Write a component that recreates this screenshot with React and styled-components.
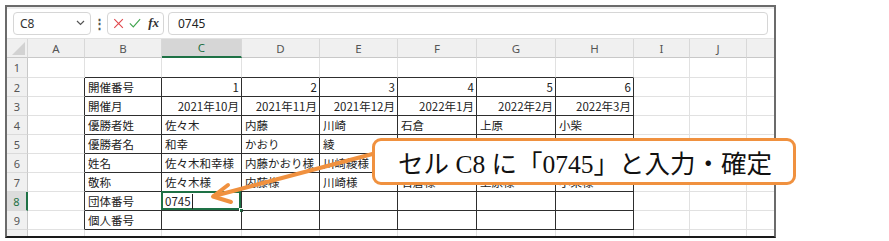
import styled, { createGlobalStyle } from 'styled-components';

const GlobalStyle = createGlobalStyle`
  html, body {
    margin: 0;
    padding: 0;
    background: #ffffff;
    width: 889px;
    height: 241px;
    overflow: hidden;
  }
`;

const Page = styled.div`
  position: relative;
  width: 889px;
  height: 241px;
  padding: 5px 0 0 5px;
  box-sizing: border-box;
`;

const Frame = styled.div`
  width: 771px;
  height: 233px;
  box-sizing: border-box;
  border: 2px solid #6b6b6b;
  border-bottom-color: #1a1a1a;
  overflow: hidden;
  background: #fff;
`;

const FormulaBar = styled.div`
  display: flex;
  align-items: center;
  height: 32px;
  box-sizing: border-box;
  padding: 2px 6px 3px 6px;
  border-top: 2px solid #ececec;
  border-bottom: 1px solid #e2e2e2;
  font-family: "Noto Sans", "Liberation Sans", sans-serif;
`;

const NameBox = styled.div`
  width: 78px;
  height: 23px;
  box-sizing: border-box;
  border: 1px solid #d6d6d6;
  border-radius: 4px;
  display: flex;
  align-items: center;
  justify-content: space-between;
  padding: 0 5px 0 6px;
  font-size: 12px;
  color: #333;
`;

const Dots = styled.div`
  width: 16px;
  display: flex;
  justify-content: center;
  color: #555;
  font-size: 13px;
  font-weight: bold;
`;

const IconBox = styled.div`
  width: 57px;
  height: 23px;
  box-sizing: border-box;
  border: 1px solid #d6d6d6;
  border-radius: 4px;
  display: flex;
  align-items: center;
  gap: 5px;
  padding: 0 4px 0 5px;
`;

const Fx = styled.span`
  font-family: "Liberation Serif", serif;
  font-style: italic;
  font-weight: bold;
  font-size: 13px;
  color: #333;
  margin-left: 2px;
`;

const FormulaInput = styled.div`
  flex: 1;
  height: 23px;
  box-sizing: border-box;
  margin-left: 4px;
  border: 1px solid #d6d6d6;
  border-radius: 4px;
  display: flex;
  align-items: center;
  padding-left: 9px;
  font-size: 12px;
  color: #222;
`;

const COLS = [21, 57, 77, 80, 78, 78, 79, 79, 78, 56, 57, 80];
const ROWS = [19, 20, 19, 19, 19, 19, 19, 19, 19, 19, 19];

const Sheet = styled.div`
  display: grid;
  grid-template-columns: ${COLS.map((w) => `${w}px`).join(' ')};
  grid-template-rows: ${ROWS.map((h) => `${h}px`).join(' ')};
  font-family: "Noto Sans CJK JP", "Noto Sans", sans-serif;
`;

const Corner = styled.div`
  position: relative;
  background: #f0f0f0;
  border-right: 1px solid #d8d8d8;
  border-bottom: 1px solid #c8c8c8;
  box-sizing: border-box;
  &::after {
    content: '';
    position: absolute;
    right: 2px;
    bottom: 2px;
    width: 0;
    height: 0;
    border-left: 13px solid transparent;
    border-bottom: 13px solid #d2d2d2;
  }
`;

const ColHead = styled.div`
  box-sizing: border-box;
  background: ${(p) => (p.$active ? '#d6d6d6' : '#f0f0f0')};
  border-right: 1px solid #d8d8d8;
  border-bottom: ${(p) => (p.$active ? '2px solid #1e7145' : '1px solid #c8c8c8')};
  color: ${(p) => (p.$active ? '#1e7145' : '#555')};
  font-family: "Noto Sans", "Liberation Sans", sans-serif;
  font-size: 11.5px;
  display: flex;
  align-items: center;
  justify-content: center;
`;

const RowHead = styled.div`
  box-sizing: border-box;
  background: ${(p) => (p.$active ? '#dcdcdc' : '#f0f0f0')};
  border-right: ${(p) => (p.$active ? '2px solid #1e7145' : '1px solid #c8c8c8')};
  border-bottom: 1px solid #dadada;
  color: ${(p) => (p.$active ? '#1e7145' : '#555')};
  font-family: "Noto Sans", "Liberation Sans", sans-serif;
  font-size: 11px;
  display: flex;
  align-items: center;
  justify-content: center;
`;

const Cell = styled.div`
  position: relative;
  box-sizing: border-box;
  border-right: 1px solid ${(p) => (p.$darkRight ? '#2e2e2e' : '#e1e1e1')};
  border-bottom: 1px solid ${(p) => (p.$darkBottom ? '#2e2e2e' : '#e1e1e1')};
  font-size: 11.5px;
  color: #222;
  white-space: nowrap;
  overflow: visible;
  display: flex;
  align-items: flex-end;
  justify-content: ${(p) => (p.$right ? 'flex-end' : 'flex-start')};
  padding: 0 2px 1px 3px;
  line-height: 16px;
  ${(p) =>
    p.$selected &&
    `
    box-shadow: inset 0 0 0 2px #1e7145;
    margin: -1px 0 0 -1px;
    width: calc(100% + 1px);
    height: calc(100% + 1px);
    padding-left: 4px;
  `}
`;

const Caret = styled.span`
  display: inline-block;
  width: 1px;
  height: 15px;
  background: #222;
  margin-left: 1px;
`;

const Handle = styled.span`
  position: absolute;
  right: -3px;
  bottom: -3px;
  width: 5px;
  height: 5px;
  background: #1e7145;
  border: 1px solid #fff;
  box-sizing: border-box;
`;

const Overlay = styled.svg`
  position: absolute;
  left: 0;
  top: 0;
  pointer-events: none;
`;

const Callout = styled.div`
  position: absolute;
  left: 372px;
  top: 138px;
  width: 424px;
  height: 47px;
  box-sizing: border-box;
  border: 3px solid #f0913f;
  border-radius: 9px;
  background: #fff;
  display: flex;
  align-items: center;
  padding-left: 23px;
  font-family: "Liberation Serif", "Noto Sans CJK JP", serif;
  font-size: 25.5px;
  color: #111;
  white-space: nowrap;
`;

const LETTERS = ['A', 'B', 'C', 'D', 'E', 'F', 'G', 'H', 'I', 'J', 'K'];

// F5:H6 sit fully under the callout, so they are left blank
const DATA = {
  2: ['', '開催番号', '1', '2', '3', '4', '5', '6'],
  3: ['', '開催月', '2021年10月', '2021年11月', '2021年12月', '2022年1月', '2022年2月', '2022年3月'],
  4: ['', '優勝者姓', '佐々木', '内藤', '川崎', '石倉', '上原', '小柴'],
  5: ['', '優勝者名', '和幸', 'かおり', '綾'],
  6: ['', '姓名', '佐々木和幸様', '内藤かおり様', '川崎綾様'],
  7: ['', '敬称', '佐々木様', '内藤様', '川崎様', '石倉様', '上原様', '小柴様'],
  8: ['', '団体番号', '0745'],
  9: ['', '個人番号'],
};

const isRightAligned = (row, col) => (row === 2 || row === 3) && col >= 2 && col <= 7;

export default function App() {
  const rows = [];
  for (let r = 1; r <= 10; r++) {
    rows.push(
      <RowHead key={`rh${r}`} $active={r === 8}>
        {r}
      </RowHead>
    );
    for (let c = 0; c < LETTERS.length; c++) {
      const inTable = r >= 2 && r <= 9;
      const darkRight = inTable && c >= 0 && c <= 7;
      const darkBottom = (inTable || r === 1) && c >= 1 && c <= 7;
      const value = (DATA[r] && DATA[r][c]) || '';
      const selected = r === 8 && c === 2;
      rows.push(
        <Cell
          key={`${r}-${c}`}
          $darkRight={darkRight}
          $darkBottom={darkBottom}
          $right={isRightAligned(r, c)}
          $selected={selected}
        >
          {value}
          {selected && <Caret />}
          {selected && <Handle />}
        </Cell>
      );
    }
  }

  return (
    <>
      <GlobalStyle />
      <Page>
        <Frame>
          <FormulaBar>
            <NameBox>
              <span>C8</span>
              <svg width="9" height="6" viewBox="0 0 9 6">
                <path d="M1 1l3.5 3.5L8 1" fill="none" stroke="#555" strokeWidth="1.2" />
              </svg>
            </NameBox>
            <Dots>⋮</Dots>
            <IconBox>
              <svg width="13" height="13" viewBox="0 0 13 13">
                <path d="M1.5 1.5l10 10M11.5 1.5l-10 10" stroke="#e0474c" strokeWidth="1.3" fill="none" />
              </svg>
              <svg width="14" height="12" viewBox="0 0 14 12">
                <path d="M1 6.5l4 4L13 1.5" stroke="#3fa34d" strokeWidth="1.3" fill="none" />
              </svg>
              <Fx>fx</Fx>
            </IconBox>
            <FormulaInput>0745</FormulaInput>
          </FormulaBar>
          <Sheet>
            <Corner />
            {LETTERS.map((l) => (
              <ColHead key={l} $active={l === 'C'}>
                {l}
              </ColHead>
            ))}
            {rows}
          </Sheet>
        </Frame>
        <Overlay width="889" height="241" viewBox="0 0 889 241">
          <g stroke="#f0913f" strokeWidth="4" strokeLinecap="round" fill="none">
            <path d="M380 152L214 196" />
            <path d="M228 185L213 196.5L231 202" strokeLinejoin="round" />
          </g>
        </Overlay>
        <Callout>セル C8 に「0745」と入力・確定</Callout>
      </Page>
    </>
  );
}
